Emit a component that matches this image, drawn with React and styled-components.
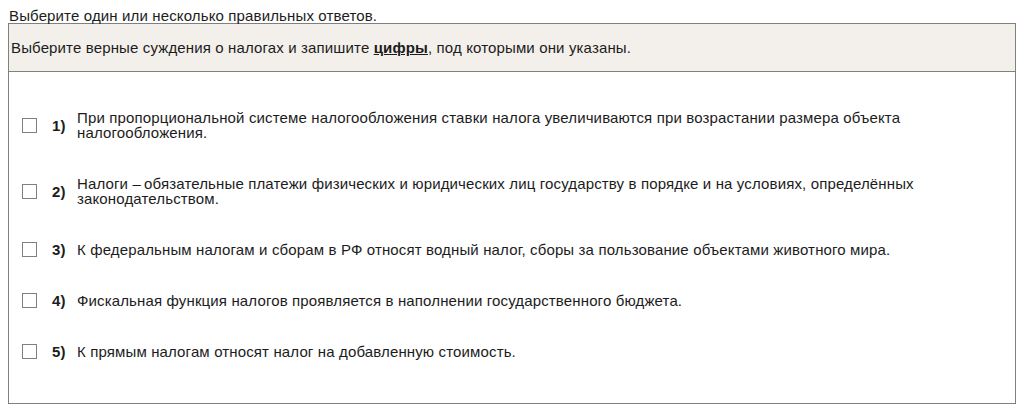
import React from 'react';
import styled, {createGlobalStyle} from "styled-components";

const GlobalStyle = createGlobalStyle`
  body {
    margin: 8px;
    font-family: "Liberation Sans", Arial, sans-serif;
    font-size: 15px;
    line-height: 15px;
    letter-spacing: 0.14px;
    color: #1c1c1c;
    background: #fff;
  }
`

const Hint = styled.div`
  padding-left: 1px;
  height: 15px;
`

const Task = styled.div`
  width: 1008px;
  border: 1px solid #808080;
  box-sizing: border-box;
  height: 381px;
`

const Question = styled.div`
  background-color: #f3f0eb;
  border-bottom: 1px solid #808080;
  padding: 16px 2px;
`

const Key = styled.b`
  text-decoration: underline;
`

const Options = styled.div`
  display: flex;
  flex-direction: column;
  gap: 36px;
  padding: 38px 0 0 13px;
`

const Option = styled.label`
  display: flex;
  align-items: center;
`

const Box = styled.span`
  width: 13px;
  height: 13px;
  border: 1px solid #808080;
  background: #fff;
  flex-shrink: 0;
`

const Num = styled.b`
  width: 25px;
  margin-left: 15px;
  flex-shrink: 0;
`

const Text = styled.span`
  max-width: 850px;
`

const options = [
    "При пропорциональной системе налогообложения ставки налога увеличиваются при возрастании размера объекта налогообложения.",
    "Налоги\u00a0–\u2009обязательные платежи физических и юридических лиц государству в порядке и на условиях, определённых законодательством.",
    "К федеральным налогам и сборам в РФ относят водный налог, сборы за пользование объектами животного мира.",
    "Фискальная функция налогов проявляется в наполнении государственного бюджета.",
    "К прямым налогам относят налог на добавленную стоимость.",
]

const App = () => {
    return (
        <>
            <GlobalStyle/>
            <Hint>Выберите один или несколько правильных ответов.</Hint>
            <Task>
                <Question>
                    Выберите верные суждения о налогах и запишите <Key>цифры</Key>, под которыми они указаны.
                </Question>
                <Options>
                    {options.map((text, i) => (
                        <Option key={i}>
                            <Box/>
                            <Num>{i + 1})</Num>
                            <Text>{text}</Text>
                        </Option>
                    ))}
                </Options>
            </Task>
        </>
    );
};

export default App;
